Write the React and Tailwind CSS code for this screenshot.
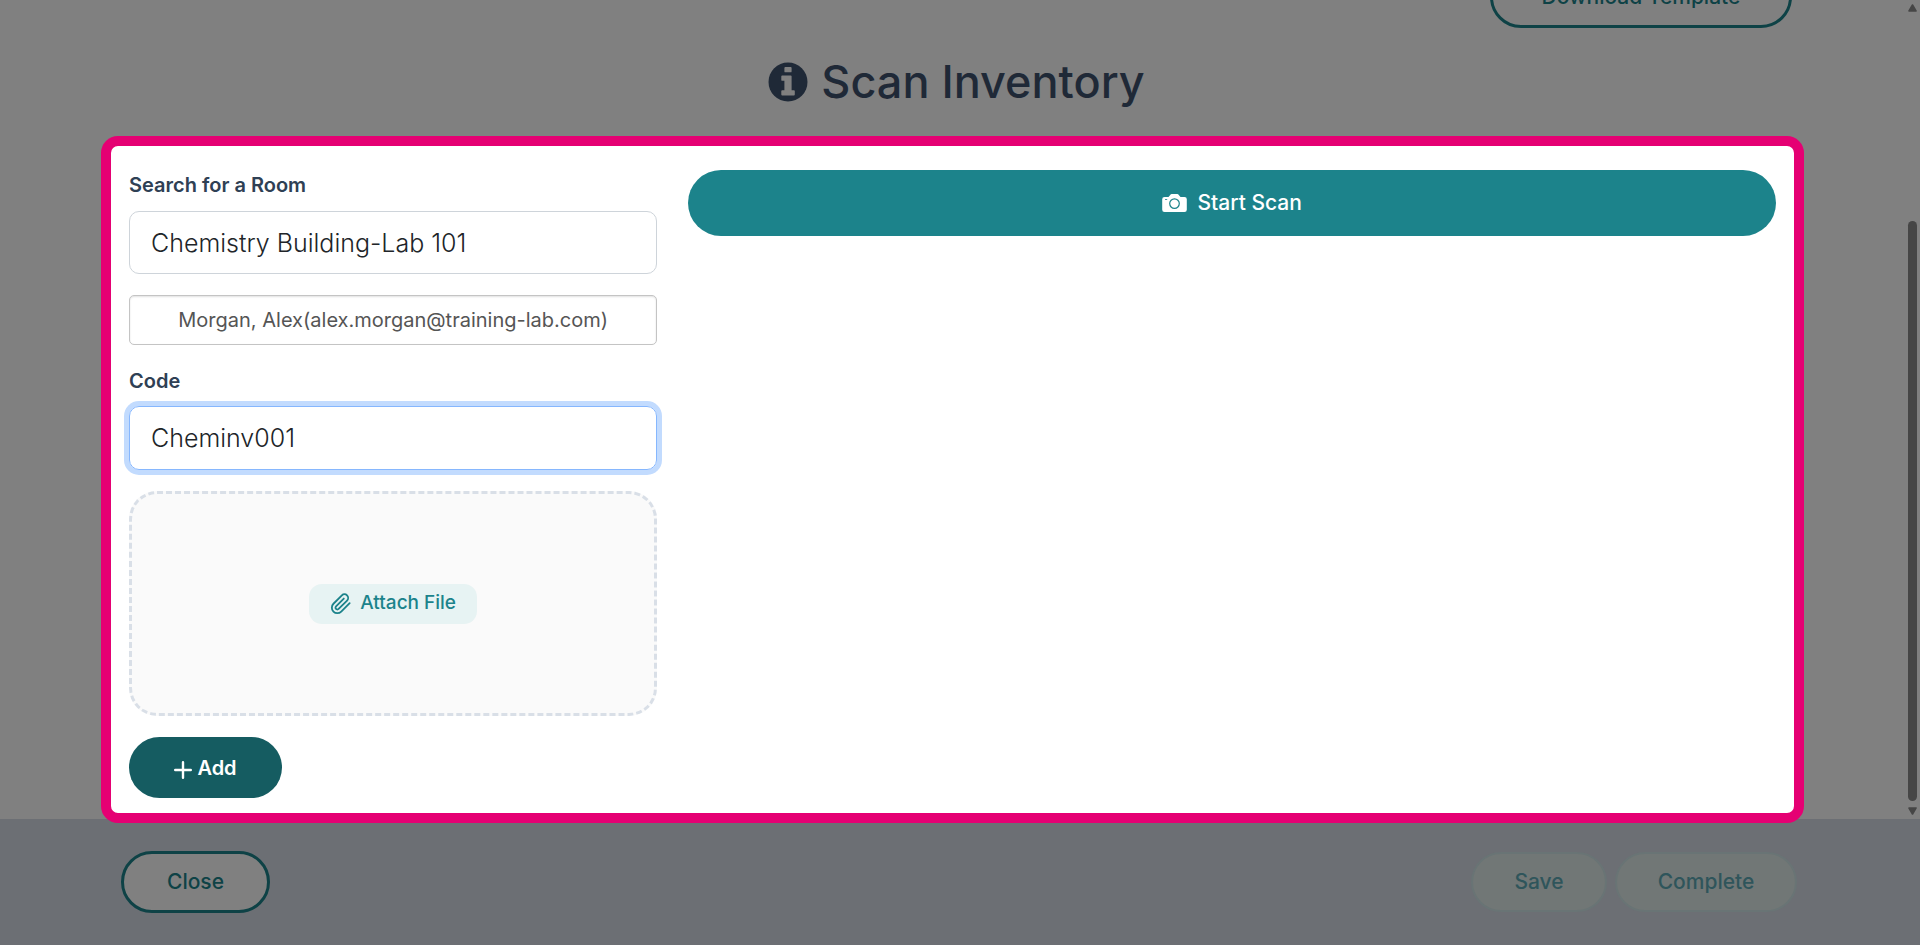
// src/App.jsx
import React, { useState } from "react";
import { FiPaperclip } from "react-icons/fi";

const InfoIcon = () => (
  <svg viewBox="0 0 40 40" className="size-10" aria-hidden="true">
    <circle cx="20" cy="20" r="19.5" fill="currentColor" />
    <path
      d="M17.3 5H22.7C23.3 5 23.6 5.4 23.6 5.9V9.4C23.6 9.9 23.3 10.3 22.7 10.3H17.3C16.8 10.3 16.4 9.9 16.4 9.4V5.9C16.4 5.4 16.8 5 17.3 5ZM14.2 13.5H22.7C23.3 13.5 23.6 13.8 23.6 14.3V28.2H25.9C26.5 28.2 26.8 28.6 26.8 29.1V32.6C26.8 33.1 26.5 33.5 25.9 33.5H14.2C13.7 33.5 13.3 33.1 13.3 32.6V29.1C13.3 28.6 13.7 28.2 14.2 28.2H16.4V18.8H14.2C13.7 18.8 13.3 18.4 13.3 17.9V14.3C13.3 13.8 13.7 13.5 14.2 13.5Z"
      fill="#808080"
    />
  </svg>
);

const CameraIcon = () => (
  <svg viewBox="0 0 25 18" className="h-[18px] w-[25px]" aria-hidden="true">
    <path
      d="M2.5 3H6.5L8.2 0.9C8.6 0.4 9 0 9.8 0H15.2C16 0 16.4 0.4 16.8 0.9L18.5 3H22.5A2.3 2.3 0 0 1 24.8 5.3V15.7A2.3 2.3 0 0 1 22.5 18H2.5A2.3 2.3 0 0 1 0.2 15.7V5.3A2.3 2.3 0 0 1 2.5 3Z"
      fill="currentColor"
    />
    <circle cx="12.5" cy="9.6" r="4.8" fill="none" stroke="#1c838b" strokeWidth="1.2" />
    <path d="M3.4 5.5H4.8" stroke="#1c838b" strokeWidth="0.8" strokeLinecap="round" />
  </svg>
);

const PlusIcon = () => (
  <svg viewBox="0 0 18 18" className="mt-1 size-[18px]" aria-hidden="true">
    <path
      d="M9 1.2V16.8M1.2 9H16.8"
      stroke="currentColor"
      strokeWidth="2.4"
      strokeLinecap="round"
    />
  </svg>
);

const Scrollbar = () => (
  <div className="flex w-[15px] shrink-0 flex-col items-center py-1" aria-hidden="true">
    <svg viewBox="0 0 9 8" className="h-2 w-[9px]">
      <path d="M4.5 1L8 7H1Z" fill="#464646" stroke="#464646" strokeWidth="1.6" strokeLinejoin="round" />
    </svg>
    <div className="mt-[209px] mb-1.5 w-[9px] flex-1 rounded-full bg-[#464646]" />
    <svg viewBox="0 0 9 8" className="h-2 w-[9px]">
      <path d="M4.5 7L8 1H1Z" fill="#464646" stroke="#464646" strokeWidth="1.6" strokeLinejoin="round" />
    </svg>
  </div>
);

const ScanForm = ({ room, setRoom, code, setCode }) => (
  <div className="flex flex-col">
    <label htmlFor="room" className="text-xl leading-[30px] font-semibold text-[#2f4054]">
      Search for a Room
    </label>
    <input
      id="room"
      type="text"
      value={room}
      onChange={(e) => setRoom(e.target.value)}
      className="mt-[11px] h-[63px] w-full rounded-[10px] border border-[#ced4da] px-[21px] text-[25px] font-light text-[#212529] outline-none"
    />
    <input
      type="text"
      readOnly
      aria-label="Room owner"
      value="Morgan, Alex(alex.morgan@training-lab.com)"
      className="mt-[21px] h-[50px] w-full rounded-[5px] border border-[#c4c4c4] px-4 text-center text-xl text-[#555] shadow-[inset_0_1px_2px_rgba(0,0,0,0.12)] outline-none"
    />
    <label
      htmlFor="code"
      className="mt-[21px] text-xl leading-[30px] font-semibold text-[#2f4054]"
    >
      Code
    </label>
    <input
      id="code"
      type="text"
      value={code}
      onChange={(e) => setCode(e.target.value)}
      className="mt-[10px] h-[64px] w-full rounded-[10px] border border-[#86b7fe] px-[21px] text-[25px] font-light text-[#212529] shadow-[0_0_0_5px_#c2dbfe] outline-none"
    />
    <div className="mt-[21px] flex h-[225px] items-center justify-center rounded-[28px] border-3 border-dashed border-[#d9dfe7] bg-[#fafafa]">
      <button
        type="button"
        className="flex h-10 items-center gap-2 rounded-[13px] bg-[#e7f3f3] px-[21px] text-[19px] font-medium text-[#1c838b]"
      >
        <FiPaperclip className="size-[22px]" />
        Attach File
      </button>
    </div>
    <button
      type="button"
      className="mt-[21px] flex h-[61px] w-[153px] items-center justify-center gap-[5px] rounded-full bg-[#155c61] text-xl font-semibold text-white"
    >
      <PlusIcon />
      Add
    </button>
  </div>
);

const Footer = () => (
  <footer className="flex h-[126px] items-center justify-between bg-[#6c6f74] pr-[123px] pl-[121px] text-[21px] font-medium">
    <button
      type="button"
      className="h-[62px] w-[149px] rounded-[31px] border-3 border-[#0e4246] bg-[#808080] text-[#0e4246]"
    >
      Close
    </button>
    <div className="flex gap-2">
      <button
        type="button"
        disabled
        className="h-[60px] w-[136px] rounded-full border-2 border-[#697475] bg-[#717776] text-[#2f555b]"
      >
        Save
      </button>
      <button
        type="button"
        disabled
        className="h-[60px] w-[182px] rounded-full border-2 border-[#697475] bg-[#717776] text-[#2f555b]"
      >
        Complete
      </button>
    </div>
  </footer>
);

export default function App() {
  const [room, setRoom] = useState("Chemistry Building-Lab 101");
  const [code, setCode] = useState("Cheminv001");

  return (
    <div className="flex h-screen flex-col overflow-hidden bg-[#808080] font-['Inter','Liberation_Sans',sans-serif]">
      <div className="flex flex-1">
        <main className="flex flex-1 flex-col pr-[101px] pl-[101px]">
          <div className="-mt-[34px] flex justify-end pr-3">
            <button
              type="button"
              className="h-[62px] w-[302px] rounded-[31px] border-3 border-[#0e4246] text-[21px] font-medium text-[#0e4246]"
            >
              Download Template
            </button>
          </div>
          <h1 className="mt-[24px] flex items-center justify-center gap-[13px] pl-2 text-[45px] leading-[60px] font-medium text-[#1f2937]">
            <InfoIcon />
            Scan Inventory
          </h1>
          <section className="relative z-10 mt-6 -mb-1 flex-1 rounded-[17px] border-10 border-[#e50073] bg-white pt-6 pr-[18px] pb-3 pl-[18px]">
            <div className="grid grid-cols-3 gap-[31px]">
              <ScanForm room={room} setRoom={setRoom} code={code} setCode={setCode} />
              <div className="col-span-2">
                <button
                  type="button"
                  className="flex h-[66px] w-full items-center justify-center gap-[10px] rounded-full bg-[#1c838b] text-[21px] font-medium text-white"
                >
                  <CameraIcon />
                  Start Scan
                </button>
              </div>
            </div>
          </section>
        </main>
        <Scrollbar />
      </div>
      <Footer />
    </div>
  );
}
